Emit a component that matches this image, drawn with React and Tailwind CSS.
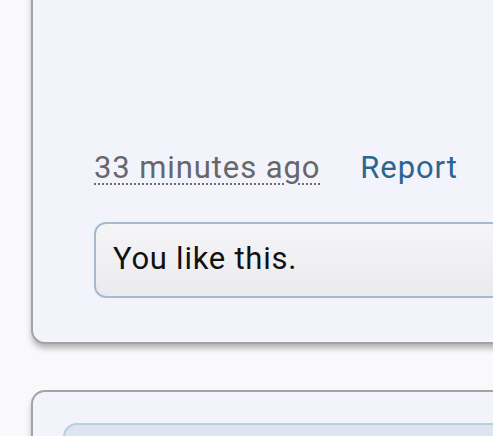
import React from 'react';

const Card = ({ children, className = '' }) => (
  <div
    className={`w-[520px] shrink-0 rounded-[14px] border-2 border-[#a3a3a6] bg-[#f3f4fb] shadow-[0_5px_6px_-1px_rgba(0,0,0,0.3)] ${className}`}
  >
    {children}
  </div>
);

const App = () => {
  return (
    <div
      className="w-[493px] h-[436px] overflow-hidden bg-[#f9f9fc] pl-[31px]"
      style={{ fontFamily: 'Roboto, "Noto Sans", sans-serif' }}
    >
      <Card className="-mt-[40px] pt-[188px] pb-[44px]">
        <div className="flex items-center pl-[61px] text-[31px] leading-[36px] tracking-[0.9px]">
          <span className="text-[#67676b] underline decoration-dotted decoration-2 underline-offset-[5px] decoration-[#6c6c70]">
            33 minutes ago
          </span>
          <a href="#" className="ml-[40px] text-[#2c6592]">
            Report
          </a>
        </div>
        <div className="ml-[61px] mt-[36px] rounded-[12px] border-2 border-[#a6bacb] bg-gradient-to-b from-[#f5f5f8] to-[#ebebef] pl-[17px] pt-[17px] pb-[19px] text-[31px] leading-[36px] tracking-[0.75px] text-[#111111]">
          You like this.
        </div>
      </Card>

      <Card className="mt-[46px] pt-[31px] pl-[30px] pb-[40px]">
        <div className="h-[80px] rounded-[14px] border-2 border-[#b6cfe1] bg-[#dfe4f1]" />
      </Card>
    </div>
  );
};

export default App;
